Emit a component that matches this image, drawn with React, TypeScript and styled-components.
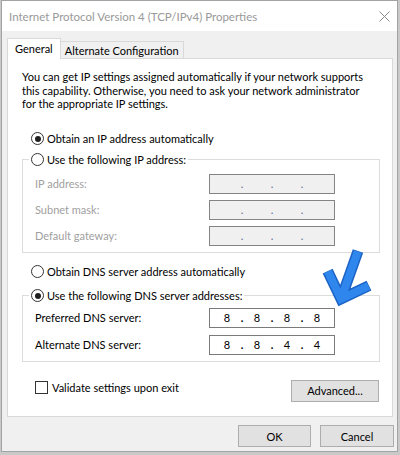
import React from "react";
import styled, { createGlobalStyle } from "styled-components";

const Global = createGlobalStyle`
  html, body { margin: 0; padding: 0; }
  body {
    background: #c9c9c9;
    font-family: Lato, "Noto Sans", sans-serif;
    font-size: 11px;
    color: #000;
  }
  * { box-sizing: border-box; }
`;

const Window = styled.div`
  position: relative;
  margin-left: 1px;
  width: 397px;
  height: 452px;
  border: 1px solid #a3a3a3;
  background: #f0f0f0;
  display: flex;
  flex-direction: column;
`;

const TitleBar = styled.div`
  height: 30px;
  background: #fff;
  display: flex;
  align-items: center;
  justify-content: space-between;
  padding: 0 7px 0 7px;
  color: #999;
  font-size: 11.5px;
`;

const Body = styled.div`
  padding: 7px 4px 0 5px;
  display: flex;
  flex-direction: column;
`;

const TabStrip = styled.div`
  display: flex;
  align-items: flex-end;
  margin-bottom: -1px;
  height: 21px;
`;

const Tab = styled.div<{ $active?: boolean }>`
  position: relative;
  z-index: ${(p) => (p.$active ? 1 : 0)};
  display: flex;
  align-items: center;
  background: ${(p) => (p.$active ? "#fff" : "#f0f0f0")};
  border: 1px solid #d9d9d9;
  border-bottom: none;
  border-left: ${(p) => (p.$active ? "1px solid #d9d9d9" : "none")};
  height: ${(p) => (p.$active ? "21px" : "17px")};
  margin-bottom: ${(p) => (p.$active ? "0" : "1px")};
  padding: ${(p) => (p.$active ? "0 7px 2px 7px" : "0 4px 0 4px")};
`;

const Panel = styled.div`
  height: 359px;
  background: #fff;
  border: 1px solid #d9d9d9;
  padding: 11px 12px 0 14px;
  display: flex;
  flex-direction: column;
`;

const Description = styled.p`
  margin: 0;
  line-height: 13.5px;
`;

const RadioRow = styled.label<{ $mt?: number; $indent?: number }>`
  display: flex;
  align-items: center;
  gap: 3px;
  height: 16px;
  margin-top: ${(p) => p.$mt ?? 0}px;
  margin-left: ${(p) => p.$indent ?? 0}px;
`;

const RadioCircle = styled.span`
  width: 13px;
  height: 13px;
  border: 1px solid #333;
  border-radius: 50%;
  background: #fff;
  display: inline-flex;
  align-items: center;
  justify-content: center;
  flex: none;
`;

const RadioDot = styled.span`
  width: 6px;
  height: 6px;
  border-radius: 50%;
  background: #1f1f1f;
`;

const Group = styled.fieldset<{ $mt: number }>`
  margin: ${(p) => p.$mt}px 0 0 0;
  padding: 0;
  min-width: 0;
  border: 1px solid #dcdcdc;
`;

const Legend = styled.legend`
  margin-left: 6px;
  padding: 0 2px;
`;

const Rows = styled.div<{ $gap: number; $pt: number }>`
  display: grid;
  grid-template-columns: 174px 126px;
  row-gap: ${(p) => p.$gap}px;
  align-items: center;
  padding: ${(p) => p.$pt}px 0 6px 12px;
`;

const FieldLabel = styled.span<{ $disabled?: boolean }>`
  color: ${(p) => (p.$disabled ? "#a0a0a0" : "#000")};
`;

const IpBox = styled.div<{ $disabled?: boolean }>`
  height: 20px;
  border: 1px solid ${(p) => (p.$disabled ? "#848484" : "#7a7a7a")};
  background: ${(p) => (p.$disabled ? "#f0f0f0" : "#fff")};
  display: flex;
  justify-content: center;
  align-items: center;
`;

const Octet = styled.span`
  width: 22px;
  text-align: center;
`;

const Dot = styled.span<{ $disabled?: boolean }>`
  width: 8px;
  text-align: center;
  color: ${(p) => (p.$disabled ? "#5d6e94" : "#000")};
  font-weight: ${(p) => (p.$disabled ? 400 : 700)};
`;

const BottomRow = styled.div`
  margin-top: 18px;
  display: flex;
  justify-content: space-between;
  align-items: flex-start;
  padding-right: 1px;
`;

const CheckRow = styled.label`
  display: flex;
  align-items: center;
  gap: 4px;
  margin: 1px 0 0 13px;
  height: 14px;
`;

const CheckBox = styled.span`
  width: 13px;
  height: 13px;
  border: 1px solid #333;
  background: #fff;
  flex: none;
`;

const Button = styled.button<{ $w: number }>`
  width: ${(p) => p.$w}px;
  height: 22px;
  background: #e1e1e1;
  border: 1px solid #adadad;
  font: inherit;
  color: #000;
  padding: 0;
  display: flex;
  align-items: center;
  justify-content: center;
`;

const Footer = styled.div`
  margin-top: 8px;
  display: flex;
  justify-content: flex-end;
  gap: 9px;
  padding-right: 0px;
  margin-right: -1px;
`;

const ArrowSvg = styled.svg`
  position: absolute;
  left: 309px;
  top: 244px;
  pointer-events: none;
`;

function Radio({ checked }: { checked?: boolean }) {
  return <RadioCircle>{checked && <RadioDot />}</RadioCircle>;
}

function Ip({ value, disabled }: { value?: string[]; disabled?: boolean }) {
  const parts = value ?? ["", "", "", ""];
  return (
    <IpBox $disabled={disabled}>
      {parts.map((p, i) => (
        <React.Fragment key={i}>
          {i > 0 && <Dot $disabled={disabled}>.</Dot>}
          <Octet>{p}</Octet>
        </React.Fragment>
      ))}
    </IpBox>
  );
}

function CloseIcon() {
  return (
    <svg width="11" height="11" viewBox="0 0 11 11">
      <path d="M0.5 0.5 L10.5 10.5 M10.5 0.5 L0.5 10.5" stroke="#8a8a8a" strokeWidth="1" fill="none" />
    </svg>
  );
}

function Arrow() {
  return (
    <ArrowSvg width="70" height="72" viewBox="309 244 70 72">
      <g transform="translate(339 298) rotate(-25.5)">
        <path d="M0 -31 L0 0 L31 0 M3 -3 L36 -36" stroke="#1b63c6" strokeWidth="11" fill="none" strokeLinejoin="miter" />
        <path d="M0 -30.5 L0 0 L30.5 0 M3 -3 L35.5 -35.5" stroke="#2f86ec" strokeWidth="8" fill="none" strokeLinejoin="miter" />
      </g>
    </ArrowSvg>
  );
}

export default function App() {
  return (
    <>
      <Global />
      <Window>
        <TitleBar>
          <span>Internet Protocol Version 4 (TCP/IPv4) Properties</span>
          <CloseIcon />
        </TitleBar>
        <Body>
          <TabStrip>
            <Tab $active>General</Tab>
            <Tab>Alternate Configuration</Tab>
          </TabStrip>
          <Panel>
            <Description>
              You can get IP settings assigned automatically if your network supports
              <br />
              this capability. Otherwise, you need to ask your network administrator
              <br />
              for the appropriate IP settings.
            </Description>
            <RadioRow $mt={20} $indent={9}>
              <Radio checked />
              Obtain an IP address automatically
            </RadioRow>
            <Group $mt={5}>
              <Legend>
                <RadioRow>
                  <Radio />
                  Use the following IP address:
                </RadioRow>
              </Legend>
              <Rows $gap={6} $pt={6}>
                <FieldLabel $disabled>IP address:</FieldLabel>
                <Ip disabled />
                <FieldLabel $disabled>Subnet mask:</FieldLabel>
                <Ip disabled />
                <FieldLabel $disabled>Default gateway:</FieldLabel>
                <Ip disabled />
              </Rows>
            </Group>
            <RadioRow $mt={11} $indent={9}>
              <Radio />
              Obtain DNS server address automatically
            </RadioRow>
            <Group $mt={8}>
              <Legend>
                <RadioRow>
                  <Radio checked />
                  Use the following DNS server addresses:
                </RadioRow>
              </Legend>
              <Rows $gap={7} $pt={4}>
                <FieldLabel>Preferred DNS server:</FieldLabel>
                <Ip value={["8", "8", "8", "8"]} />
                <FieldLabel>Alternate DNS server:</FieldLabel>
                <Ip value={["8", "8", "4", "4"]} />
              </Rows>
            </Group>
            <BottomRow>
              <CheckRow>
                <CheckBox />
                Validate settings upon exit
              </CheckRow>
              <Button $w={88}>Advanced...</Button>
            </BottomRow>
          </Panel>
          <Footer>
            <Button $w={73}>OK</Button>
            <Button $w={74}>Cancel</Button>
          </Footer>
        </Body>
        <Arrow />
      </Window>
    </>
  );
}
